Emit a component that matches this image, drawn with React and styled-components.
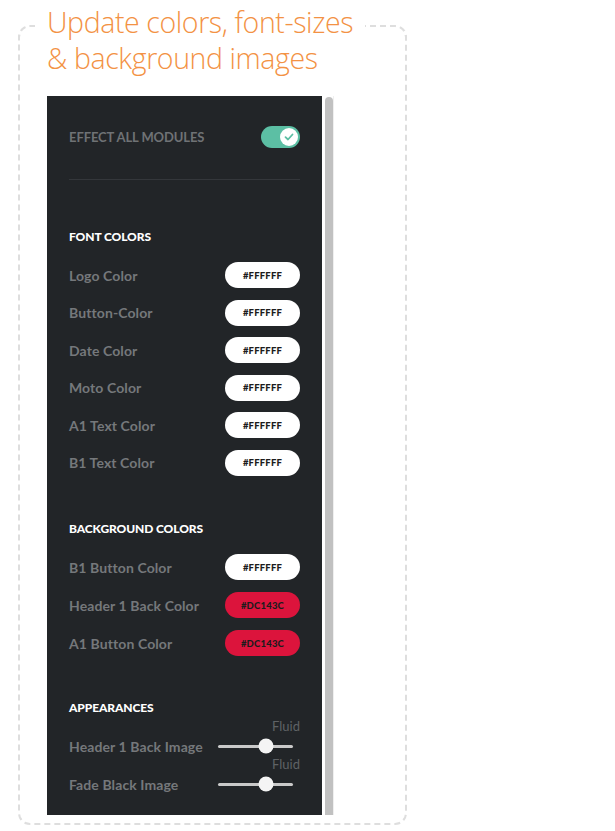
import React from 'react';
import styled, { createGlobalStyle } from 'styled-components';

const fontColors = [
  'Logo Color',
  'Button-Color',
  'Date Color',
  'Moto Color',
  'A1 Text Color',
  'B1 Text Color',
];

const backgroundColors = [
  { label: 'B1 Button Color', value: '#FFFFFF' },
  { label: 'Header 1 Back Color', value: '#DC143C' },
  { label: 'A1 Button Color', value: '#DC143C' },
];

const appearances = [
  { label: 'Header 1 Back Image', value: 64 },
  { label: 'Fade Black Image', value: 64 },
];

const App = () => {
  return (
    <>
      <GlobalStyle />
      <Page>
        <Frame>
          <Title>
            Update colors, font-sizes
            <br />
            &amp; background images
          </Title>
          <PanelRow>
            <Panel>
              <TopRow>
                <TopLabel>EFFECT ALL MODULES</TopLabel>
                <Toggle>
                  <Knob>
                    <svg width="10" height="8" viewBox="0 0 10 8">
                      <polyline
                        points="1.5,4.2 4,6.5 8.5,1.5"
                        fill="none"
                        stroke="#5cbfa4"
                        strokeWidth="1.8"
                        strokeLinecap="round"
                        strokeLinejoin="round"
                      />
                    </svg>
                  </Knob>
                </Toggle>
              </TopRow>
              <Divider />

              <Heading $top={49}>FONT COLORS</Heading>
              <RowList $gap={11.5}>
                {fontColors.map((label) => (
                  <Row key={label}>
                    <Label>{label}</Label>
                    <ColorPill $bg="#FFFFFF">#FFFFFF</ColorPill>
                  </Row>
                ))}
              </RowList>

              <Heading $top={45.5}>BACKGROUND COLORS</Heading>
              <RowList $gap={12}>
                {backgroundColors.map((item) => (
                  <Row key={item.label}>
                    <Label>{item.label}</Label>
                    <ColorPill $bg={item.value}>{item.value}</ColorPill>
                  </Row>
                ))}
              </RowList>

              <Heading $top={44}>APPEARANCES</Heading>
              <SliderList>
                {appearances.map((item) => (
                  <SliderBlock key={item.label}>
                    <Fluid>Fluid</Fluid>
                    <SliderRow>
                      <Label>{item.label}</Label>
                      <Track>
                        <Thumb style={{ left: `${item.value}%` }} />
                      </Track>
                    </SliderRow>
                  </SliderBlock>
                ))}
              </SliderList>
            </Panel>
            <ScrollTrack>
              <ScrollThumb />
            </ScrollTrack>
          </PanelRow>
        </Frame>
      </Page>
    </>
  );
};

// Styled Components

const GlobalStyle = createGlobalStyle`
  html, body {
    margin: 0;
    padding: 0;
    background: #fff;
  }
`;

const Page = styled.div`
  width: 615px;
  height: 831px;
  padding: 25px 0 0 18px;
  box-sizing: border-box;
`;

const Frame = styled.div`
  width: 389px;
  height: 800px;
  box-sizing: border-box;
  border: 2px dashed #dedede;
  border-radius: 12px;
`;

const Title = styled.h1`
  display: inline-block;
  margin: -23px 0 0 15px;
  padding: 0 12px 0 12px;
  background: #fff;
  font-family: 'Open Sans', sans-serif;
  font-weight: 300;
  font-size: 28.5px;
  line-height: 36px;
  color: #f39244;
  letter-spacing: -0.4px;
`;

const PanelRow = styled.div`
  display: flex;
  margin: 20px 0 0 27px;
`;

const Panel = styled.div`
  width: 275px;
  height: 719px;
  box-sizing: border-box;
  padding: 30px 22px 0;
  background: #222528;
  font-family: 'Lato', sans-serif;
  overflow: hidden;
`;

const TopRow = styled.div`
  display: flex;
  align-items: center;
  justify-content: space-between;
  height: 22px;
`;

const TopLabel = styled.span`
  font-size: 13px;
  font-weight: 700;
  color: #6f7275;
  letter-spacing: -0.1px;
`;

const Toggle = styled.div`
  width: 39px;
  height: 22px;
  border-radius: 11px;
  background: #5cbfa4;
  display: flex;
  align-items: center;
  justify-content: flex-end;
  padding: 0 2px;
  box-sizing: border-box;
`;

const Knob = styled.div`
  width: 18px;
  height: 18px;
  border-radius: 50%;
  background: #fff;
  display: flex;
  align-items: center;
  justify-content: center;
`;

const Divider = styled.div`
  height: 1px;
  margin-top: 31px;
  background: #34373b;
`;

const Heading = styled.h2`
  margin: ${(p) => p.$top}px 0 0;
  font-size: 12px;
  line-height: 16px;
  font-weight: 900;
  color: #ffffff;
  letter-spacing: -0.1px;
`;

const RowList = styled.div`
  display: flex;
  flex-direction: column;
  gap: ${(p) => p.$gap}px;
  margin-top: 17px;
`;

const Row = styled.div`
  display: flex;
  align-items: center;
  justify-content: space-between;
  height: 26px;
`;

const Label = styled.span`
  font-size: 14px;
  font-weight: 700;
  color: #75787b;
  letter-spacing: 0.1px;
`;

const ColorPill = styled.div`
  width: 75px;
  height: 26px;
  border-radius: 13px;
  background: ${(p) => p.$bg};
  display: flex;
  align-items: center;
  justify-content: center;
  font-size: 9.5px;
  font-weight: 900;
  color: #1c1c1c;
  letter-spacing: 0.2px;
`;

const SliderList = styled.div`
  display: flex;
  flex-direction: column;
  gap: 1px;
  margin-top: 3px;
`;

const SliderBlock = styled.div`
  display: flex;
  flex-direction: column;
`;

const Fluid = styled.div`
  align-self: flex-end;
  font-size: 13px;
  line-height: 14px;
  font-weight: 400;
  color: #5f6265;
`;

const SliderRow = styled.div`
  display: flex;
  align-items: center;
  justify-content: space-between;
  height: 20px;
  margin-top: 3px;
`;

const Track = styled.div`
  position: relative;
  width: 75px;
  height: 3px;
  margin-right: 7px;
  border-radius: 2px;
  background: #c9c9c9;
`;

const Thumb = styled.div`
  position: absolute;
  top: 50%;
  width: 15px;
  height: 15px;
  border-radius: 50%;
  background: #f4f4f4;
  transform: translate(-50%, -50%);
`;

const ScrollTrack = styled.div`
  width: 12px;
  height: 719px;
  box-sizing: border-box;
  padding: 1px 0 0 3px;
  border-right: 1px solid #efefef;
`;

const ScrollThumb = styled.div`
  width: 8px;
  height: 100%;
  background: #c1c1c1;
  border-radius: 4px 4px 0 0;
`;

export default App;
